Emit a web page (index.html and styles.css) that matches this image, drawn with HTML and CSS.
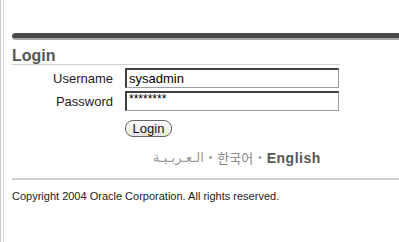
FILE: index.html
```html
<!DOCTYPE html>
<html>
  <head>
    <title>Login</title>
    <link rel="stylesheet" href="styles.css">
  </head>
  <body>
    <div class="page">
      <div class="top-bar"></div>
      <h1 class="heading">Login</h1>
      <form class="login-form">
        <label for="user">Username</label>
        <input type="text" id="user" value="sysadmin">
        <label for="pass">Password</label>
        <!-- masked value shown as plain text so the asterisks render like the old browser -->
        <input type="text" id="pass" class="masked" value="********">
        <span></span>
        <div><button type="button" class="btn">Login</button></div>
      </form>
      <div class="langs">
        <span class="lang arabic" lang="ar" dir="rtl">الـعـربـيـة</span>
        <span class="dot">&bull;</span>
        <span class="lang korean" lang="ko">한국어</span>
        <span class="dot">&bull;</span>
        <span class="lang current">English</span>
      </div>
      <div class="footer">Copyright 2004 Oracle Corporation. All rights reserved.</div>
    </div>
  </body>
</html>
```

FILE: styles.css
```css
html, body {
  height: 100%;
}

body {
  margin: 0;
  background: #fff;
  border-left: 1px solid #c8c8c8;
  box-shadow: inset 2px 0 0 #fff, inset 3px 0 0 #d8d8d8;
  font-family: "Liberation Sans", Arial, sans-serif;
  color: #222;
}

.page {
  padding: 33px 0 0 11px;
}

.top-bar {
  height: 5px;
  background: #4a4a4a;
  border-bottom: 2px solid #a8a8a8;
  border-radius: 4px 0 0 4px;
}

.heading {
  margin: 7px 0 0;
  width: 328px;
  font-size: 16px;
  line-height: 17px;
  font-weight: bold;
  color: #555;
  border-bottom: 1px solid #d0d0d0;
}

.login-form {
  display: grid;
  grid-template-columns: 101px 214px;
  column-gap: 12px;
  row-gap: 3px;
  align-items: center;
  margin-top: 3px;
}

.login-form label {
  text-align: right;
  font-size: 13px;
}

.login-form input {
  box-sizing: border-box;
  height: 20px;
  margin: 0;
  padding: 0 2px;
  border: 1px solid #a0a0a0;
  border-top: 2px solid #404040;
  border-left: 2px solid #404040;
  font-family: "Liberation Sans", Arial, sans-serif;
  font-size: 13px;
  color: #000;
}

.login-form .masked {
  font-size: 12px;
  line-height: 12px;
  padding-bottom: 5px;
}

.btn {
  margin-top: 6px;
  height: 17px;
  width: 47px;
  padding: 0;
  border: 1px solid #666;
  border-radius: 8px;
  background: linear-gradient(#fff, #e4e4e4);
  font-family: "Liberation Sans", Arial, sans-serif;
  font-size: 13px;
  color: #111;
}

.langs {
  margin: 11px 0 0 141px;
  display: flex;
  align-items: center;
  gap: 5px;
  font-size: 14px;
  color: #888;
}

.arabic {
  font-family: "DejaVu Sans", sans-serif;
  font-size: 13px;
  color: #999;
}

.korean {
  font-family: "Noto Sans CJK KR", sans-serif;
  font-size: 13px;
}

.dot {
  font-size: 10px;
  color: #999;
}

.current {
  font-weight: bold;
  letter-spacing: 0.5px;
  color: #555;
}

.footer {
  margin-top: 11px;
  padding-top: 10px;
  border-top: 2px solid #d0d0d0;
  font-size: 11px;
  color: #222;
}
```
